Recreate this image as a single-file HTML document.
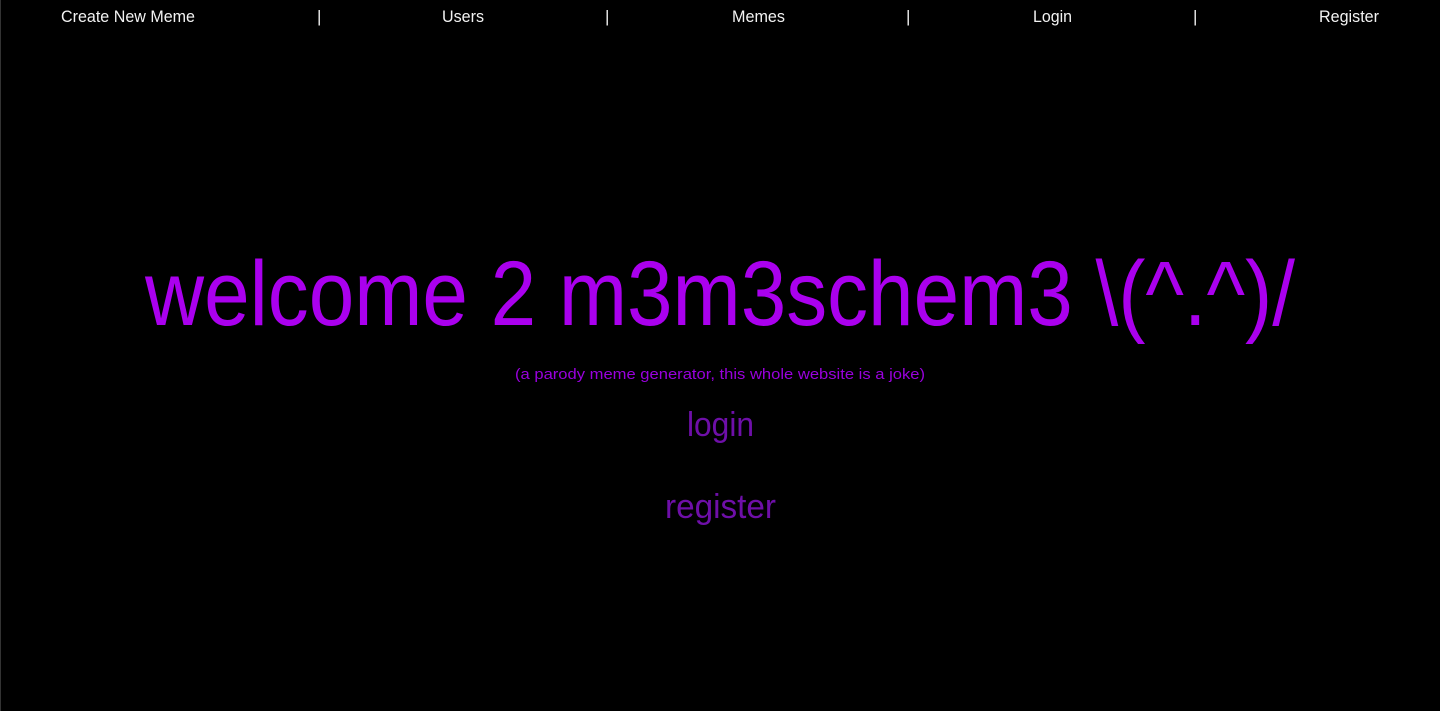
<!DOCTYPE html>
<html><head><meta charset="utf-8"><style>
html,body{margin:0;padding:0;background:#000;width:1440px;height:711px;overflow:hidden}
body{border-left:1px solid #333;box-sizing:border-box}
svg{position:absolute;left:0;top:0}
text{font-family:"Liberation Sans",sans-serif}
</style></head><body>
<svg width="1440" height="711" viewBox="0 0 1440 711">
<g fill="#f2f2f2" font-size="17">
<text x="61" y="22" textLength="134" lengthAdjust="spacingAndGlyphs">Create New Meme</text>
<text x="317" y="22">|</text>
<text x="442" y="22" textLength="42" lengthAdjust="spacingAndGlyphs">Users</text>
<text x="605" y="22">|</text>
<text x="732" y="22" textLength="53" lengthAdjust="spacingAndGlyphs">Memes</text>
<text x="906" y="22">|</text>
<text x="1033" y="22" textLength="39" lengthAdjust="spacingAndGlyphs">Login</text>
<text x="1193" y="22">|</text>
<text x="1319" y="22" textLength="60" lengthAdjust="spacingAndGlyphs">Register</text>
</g>
<text x="145" y="325" font-size="92" fill="#aa00ee" textLength="1150" lengthAdjust="spacingAndGlyphs">welcome 2 m3m3schem3 \(^.^)/</text>
<text x="515" y="379" font-size="15" fill="#9900dd" textLength="410" lengthAdjust="spacingAndGlyphs">(a parody meme generator, this whole website is a joke)</text>
<text x="687" y="436" font-size="34" fill="#6e0fa8" textLength="67" lengthAdjust="spacingAndGlyphs">login</text>
<text x="665" y="518" font-size="34" fill="#6e0fa8" textLength="111" lengthAdjust="spacingAndGlyphs">register</text>
</svg>
</body></html>
